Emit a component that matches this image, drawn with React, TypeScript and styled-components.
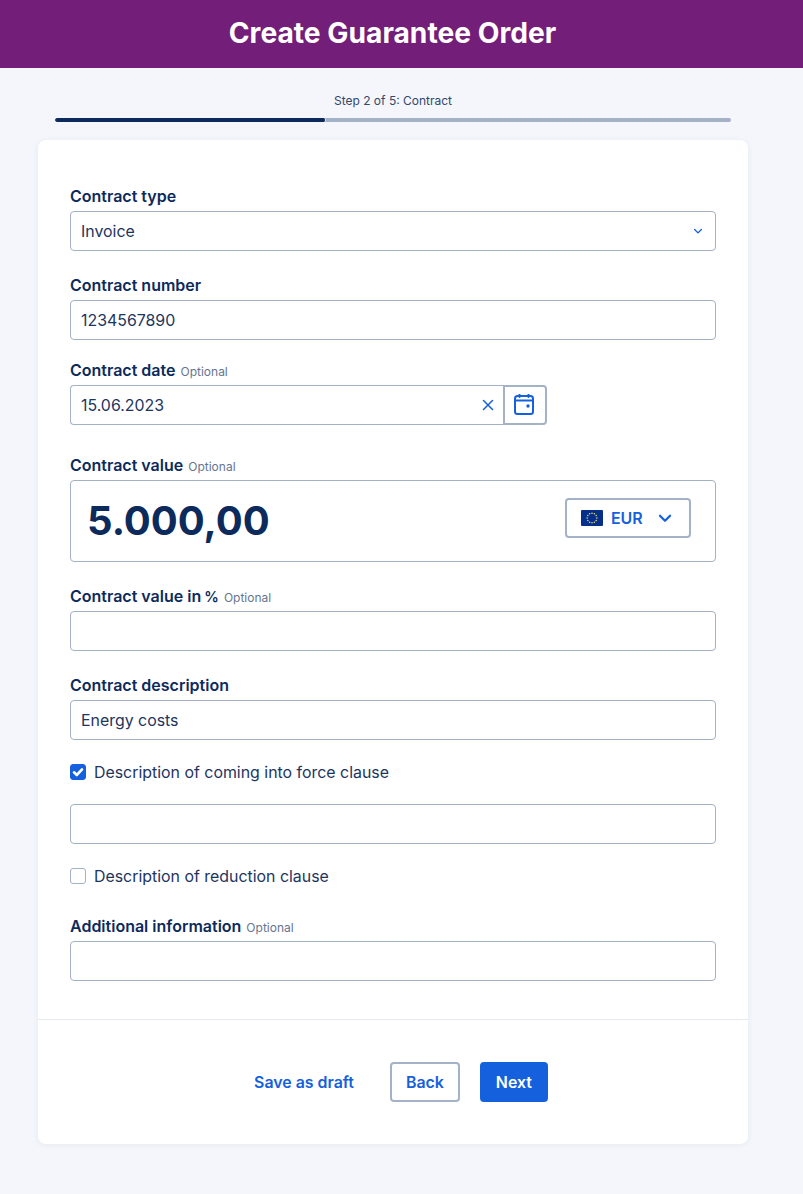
import React from "react";
import styled, { createGlobalStyle } from "styled-components";

const ink = "#0d2a5c";
const blue = "#1460dd";
const line = "#a3b2c6";

const GlobalStyle = createGlobalStyle`
  html, body {
    margin: 0;
    background: #f4f6fb;
    font-family: Inter, "Liberation Sans", sans-serif;
    color: ${ink};
  }
  * { box-sizing: border-box; }
`;

const Page = styled.div`
  height: 1194px;
  overflow: hidden;
`;

const Header = styled.header`
  height: 68px;
  padding: 0 18px 2px 0;
  background: #731e78;
  display: flex;
  align-items: center;
  justify-content: center;
`;

const Title = styled.h1`
  margin: 0;
  color: #fff;
  font-size: 28.2px;
  font-weight: 700;
  line-height: 34px;
`;

const Stepper = styled.div`
  height: 72px;
  padding: 25px 72px 0 55px;
`;

const StepText = styled.div`
  font-size: 12px;
  line-height: 16px;
  text-align: center;
  color: #33476b;
`;

const Track = styled.div`
  display: flex;
  height: 4px;
  margin-top: 9px;
  border-radius: 2px;
  overflow: hidden;
  background: ${line};
`;

const TrackFill = styled.div`
  width: 271px;
  background: ${ink};
  border-radius: 2px;
  border-right: 1px solid #f4f6fb;
`;

const Card = styled.main`
  width: 710px;
  height: 1004px;
  margin-left: 38px;
  background: #fff;
  border-radius: 8px;
  box-shadow: 0 1px 6px rgba(13, 42, 92, 0.06);
`;

const Form = styled.div`
  padding: 46px 32px 0;
  height: 880px;
  border-bottom: 1px solid #e6e9ee;
`;

const Field = styled.div<{ $top?: number }>`
  margin-top: ${(p) => p.$top ?? 0}px;
`;

const Label = styled.div`
  display: flex;
  align-items: baseline;
  gap: 5px;
  height: 20px;
  line-height: 20px;
  margin-bottom: 5px;
  font-size: 16px;
  font-weight: 600;
`;

const Percent = styled.span`
  font-size: 14.5px;
  margin-left: -1px;
`;

const Optional = styled.span`
  font-size: 12px;
  font-weight: 400;
  color: #66758f;
`;

const InputBox = styled.div<{ $width?: number }>`
  display: flex;
  align-items: center;
  justify-content: space-between;
  height: 40px;
  width: ${(p) => (p.$width ? `${p.$width}px` : "100%")};
  padding: 0 10px;
  border: 1px solid ${line};
  border-radius: 4px;
  font-size: 15.9px;
  background: #fff;
  color: #1d3560;
`;

const DateRow = styled.div`
  display: flex;
`;

const DateInput = styled(InputBox)`
  border-radius: 4px 0 0 4px;
  border-right: 0;
  padding-right: 7px;
`;

const CalendarButton = styled.div`
  width: 44px;
  height: 40px;
  display: flex;
  align-items: center;
  justify-content: center;
  border: 2px solid ${line};
  border-radius: 0 4px 4px 0;
`;

const AmountBox = styled.div`
  display: flex;
  align-items: center;
  justify-content: space-between;
  height: 82px;
  padding: 0 24px 0 16px;
  border: 1px solid ${line};
  border-radius: 4px;
`;

const Amount = styled.div`
  font-size: 40px;
  line-height: 48px;
  margin-top: -1px;
  font-weight: 700;
  color: ${ink};
`;

const CurrencyButton = styled.div`
  width: 126px;
  height: 40px;
  margin-top: -6px;
  display: flex;
  align-items: center;
  padding-left: 14px;
  border: 2px solid ${line};
  border-radius: 4px;
  color: ${blue};
  font-size: 15.9px;
  font-weight: 600;
`;

const CurrencyCode = styled.span`
  margin: 0 13px 0 8px;
`;

const CheckRow = styled.label<{ $top: number }>`
  display: flex;
  align-items: center;
  gap: 8px;
  height: 16px;
  margin-top: ${(p) => p.$top}px;
  font-size: 15.9px;
  color: #1d3560;
`;

const CheckBox = styled.span<{ $on?: boolean }>`
  width: 16px;
  height: 16px;
  display: flex;
  align-items: center;
  justify-content: center;
  border-radius: 3px;
  background: ${(p) => (p.$on ? blue : "#fff")};
  border: 1px solid ${(p) => (p.$on ? blue : line)};
`;

const Actions = styled.div`
  display: flex;
  align-items: center;
  justify-content: center;
  gap: 20px;
  padding-top: 42px;
`;

const TextButton = styled.div`
  color: ${blue};
  font-size: 15.9px;
  font-weight: 600;
  padding: 0 16px;
`;

const Button = styled.div<{ $primary?: boolean }>`
  height: 40px;
  padding: 0 14px;
  display: flex;
  align-items: center;
  border-radius: 4px;
  font-size: 15.9px;
  font-weight: 600;
  color: ${(p) => (p.$primary ? "#fff" : blue)};
  background: ${(p) => (p.$primary ? blue : "#fff")};
  border: 2px solid ${(p) => (p.$primary ? blue : line)};
`;

const SelectChevron = styled.span`
  display: flex;
  margin-right: 1px;
`;

const Chevron = ({ size, width }: { size: number; width: number }) => (
  <svg width={size} height={size} viewBox="0 0 16 16" fill="none" stroke={blue} strokeWidth={width} strokeLinecap="round" strokeLinejoin="round">
    <path d="M3.5 6l4.5 4.5L12.5 6" />
  </svg>
);

const Flag = () => {
  const stars = Array.from({ length: 12 }, (_, i) => {
    const a = (i * Math.PI) / 6;
    return <circle key={i} cx={11 + 4.8 * Math.cos(a)} cy={8 + 4.8 * Math.sin(a)} r={0.75} fill="#f0e46e" />;
  });
  return (
    <svg width="22" height="16" viewBox="0 0 22 16">
      <rect width="22" height="16" rx="1" fill="#052f88" />
      {stars}
    </svg>
  );
};

export default function App() {
  return (
    <Page>
      <GlobalStyle />
      <Header>
        <Title>Create Guarantee Order</Title>
      </Header>
      <Stepper>
        <StepText>Step 2 of 5: Contract</StepText>
        <Track>
          <TrackFill />
        </Track>
      </Stepper>
      <Card>
        <Form>
          <Field>
            <Label>Contract type</Label>
            <InputBox>
              Invoice
              <SelectChevron>
                <Chevron size={12} width={1.8} />
              </SelectChevron>
            </InputBox>
          </Field>
          <Field $top={24}>
            <Label>Contract number</Label>
            <InputBox>1234567890</InputBox>
          </Field>
          <Field $top={20}>
            <Label>
              Contract date <Optional>Optional</Optional>
            </Label>
            <DateRow>
              <DateInput $width={433}>
                15.06.2023
                <svg width="16" height="16" viewBox="0 0 16 16" fill="none" stroke={blue} strokeWidth="1.5" strokeLinecap="round">
                  <path d="M3.5 3.5l9 9M12.5 3.5l-9 9" />
                </svg>
              </DateInput>
              <CalendarButton>
                <svg width="22" height="22" viewBox="0 0 22 22" fill="none" stroke={blue} strokeWidth="2" strokeLinecap="round">
                  <rect x="1" y="2" width="18" height="18" rx="2.5" />
                  <path d="M1 6.5h18M5.5 0.5v2.5M14.5 0.5v2.5" />
                  <circle cx="14" cy="12" r="1.7" fill={blue} stroke="none" />
                </svg>
              </CalendarButton>
            </DateRow>
          </Field>
          <Field $top={30}>
            <Label>
              Contract value <Optional>Optional</Optional>
            </Label>
            <AmountBox>
              <Amount>5.000,00</Amount>
              <CurrencyButton>
                <Flag />
                <CurrencyCode>EUR</CurrencyCode>
                <Chevron size={18} width={2} />
              </CurrencyButton>
            </AmountBox>
          </Field>
          <Field $top={24}>
            <Label>
              <span>
                Contract value in <Percent>%</Percent>
              </span>
              <Optional>Optional</Optional>
            </Label>
            <InputBox />
          </Field>
          <Field $top={24}>
            <Label>Contract description</Label>
            <InputBox>Energy costs</InputBox>
          </Field>
          <CheckRow $top={24}>
            <CheckBox $on>
              <svg width="12" height="12" viewBox="0 0 12 12" fill="none" stroke="#fff" strokeWidth="2.6" strokeLinecap="round" strokeLinejoin="round">
                <path d="M2 6.3l2.8 2.7L10 3.4" />
              </svg>
            </CheckBox>
            Description of coming into force clause
          </CheckRow>
          <Field $top={24}>
            <InputBox />
          </Field>
          <CheckRow $top={24}>
            <CheckBox />
            Description of reduction clause
          </CheckRow>
          <Field $top={32}>
            <Label>
              Additional information <Optional>Optional</Optional>
            </Label>
            <InputBox />
          </Field>
        </Form>
        <Actions>
          <TextButton>Save as draft</TextButton>
          <Button>Back</Button>
          <Button $primary>Next</Button>
        </Actions>
      </Card>
    </Page>
  );
}
